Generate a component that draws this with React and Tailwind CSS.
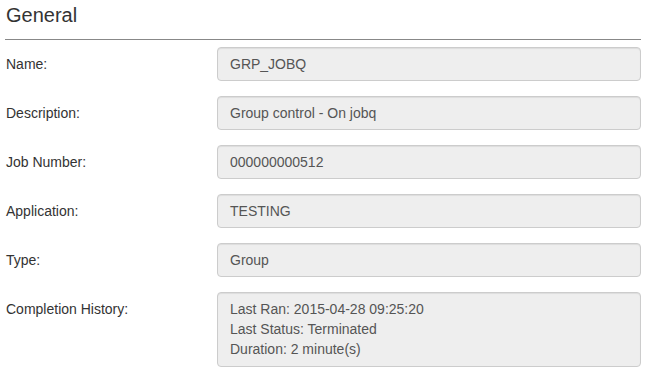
import React from 'react';

const fields = [
  { label: 'Name:', value: 'GRP_JOBQ' },
  { label: 'Description:', value: 'Group control - On jobq' },
  { label: 'Job Number:', value: '000000000512' },
  { label: 'Application:', value: 'TESTING' },
  { label: 'Type:', value: 'Group' },
];

const history = [
  'Last Ran: 2015-04-28 09:25:20',
  'Last Status: Terminated',
  'Duration: 2 minute(s)',
];

function Row({ label, children }) {
  return (
    <div className="flex">
      <div className="w-[212px] shrink-0 pt-[7px] pl-px leading-[20px] text-[#333]">{label}</div>
      <div className="w-[424px] rounded-[4px] border border-[#ccc] bg-[#eee] px-3 py-[6px] leading-[20px] text-[#555] shadow-[inset_0_1px_1px_rgba(0,0,0,0.075)]">
        {children}
      </div>
    </div>
  );
}

export default function App() {
  return (
    <div className="min-h-screen bg-white px-[5px] text-[14px] font-['Liberation_Sans',Arial,sans-serif]">
      {/* Section header */}
      <div className="border-b border-[#888] pt-[4px] pb-[13px]">
        <h3 className="pl-px text-[20px] leading-[22px] text-[#333]">General</h3>
      </div>

      <div className="mt-[7px] flex flex-col gap-[15px]">
        {fields.map((f) => (
          <Row key={f.label} label={f.label}>{f.value}</Row>
        ))}
        <Row label="Completion History:">
          <div className="pb-[1px]">
            {history.map((line) => (
              <div key={line}>{line}</div>
            ))}
          </div>
        </Row>
      </div>
    </div>
  );
}
